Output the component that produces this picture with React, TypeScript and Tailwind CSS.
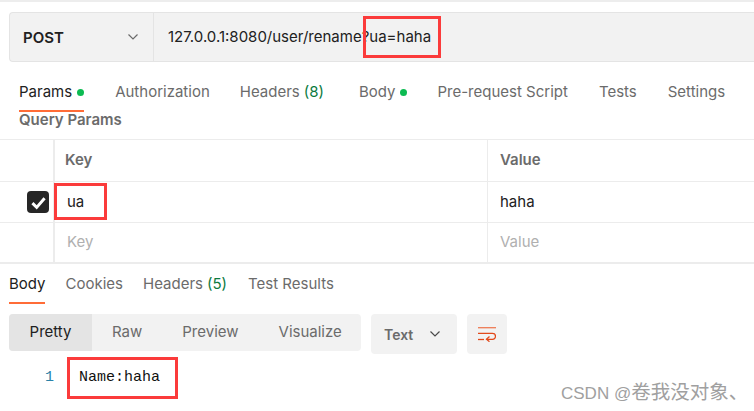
const inter = "font-['Inter','Noto_Sans',sans-serif]";

function Chevron({ className }: { className: string }) {
  return (
    <svg viewBox="0 0 12 8" className={className} fill="none" stroke="currentColor" strokeWidth="1.2">
      <path d="M1.5 1.5 6 6l4.5-4.5" />
    </svg>
  );
}

function Tab({ label, active, count, dot, className }: { label: string; active?: boolean; count?: string; dot?: boolean; className?: string }) {
  return (
    <div className={`relative flex items-center whitespace-nowrap ${active ? "text-[#212121]" : "text-[#6b6b6b]"} ${className ?? ""}`}>
      {label}
      {count && <span className="ml-1 text-[#0c7a3e]">{count}</span>}
      {dot && <span className="ml-[5px] size-[7px] rounded-full bg-[#0cbb52]" />}
    </div>
  );
}

function RedBox({ className }: { className: string }) {
  return <div className={`pointer-events-none absolute border-[3px] border-[#fb3b3b] ${className}`} />;
}

export default function App() {
  return (
    <div className={`relative h-[411px] w-[754px] overflow-hidden bg-white text-[15px] ${inter}`}>
      <div className="h-[2px] w-full bg-[#ededed]" />
      <div className="ml-[9px] mt-[10px] flex h-[50px] rounded-l-[4px] border-y border-l border-[#e4e4e4] bg-[#f2f2f2]">
        <div className="flex w-[144px] shrink-0 items-center justify-between border-r border-[#e4e4e4] pl-[13px] pr-[14px]">
          <span className="pt-[2px] font-semibold text-[#212121]">POST</span>
          <Chevron className="h-[8px] w-[12px] text-[#6b6b6b]" />
        </div>
        <div className="flex items-center pl-[14px] text-[#212121]">127.0.0.1:8080/user/rename?ua=haha</div>
      </div>

      <div className="ml-[19px] mt-[19px] flex h-[23px] items-center">
        <Tab label="Params" active dot />
        <Tab label="Authorization" className="ml-[31px]" />
        <Tab label="Headers" count="(8)" className="ml-[30px]" />
        <Tab label="Body" dot className="ml-[35px]" />
        <Tab label="Pre-request Script" className="ml-[30px]" />
        <Tab label="Tests" className="ml-[31px]" />
        <Tab label="Settings" className="ml-[31px]" />
      </div>
      <div className="ml-[19px] mt-[6px] h-[2px] w-[65px] bg-[#ff6c37]" />
      <div className="ml-[19px] mt-[-1px] h-[17px] font-semibold leading-[17px] text-[#6b6b6b]">Query Params</div>

      <div className="mt-[11px] grid grid-cols-[55px_433px_1fr] grid-rows-[41px_41px_40px] border-y border-b-2 border-[#ececec]">
        <div className="border-r-2 border-[#ececec]" />
        <div className="flex items-center border-r border-[#ececec] pl-[10px] font-semibold text-[#6b6b6b]">Key</div>
        <div className="flex items-center pl-[12px] font-semibold text-[#6b6b6b]">Value</div>

        <div className="flex items-center justify-end border-r-2 border-t border-[#ececec] pr-[4px]">
          <div className="flex size-[22px] items-center justify-center rounded-[4px] bg-[#262626]">
            <svg viewBox="0 0 14 14" className="size-[17px]" fill="none" stroke="white" strokeWidth="2.4">
              <path d="M2 7.5 5.5 11 12 3.5" />
            </svg>
          </div>
        </div>
        <div className="flex items-center border-r border-t border-[#ececec] pl-[12px] text-[#212121]">ua</div>
        <div className="flex items-center border-t border-[#ececec] pl-[12px] text-[#212121]">haha</div>

        <div className="border-r-2 border-t border-[#ececec]" />
        <div className="flex items-center border-r border-t border-[#ececec] pl-[12px] text-[#b0b0b0]">Key</div>
        <div className="flex items-center border-t border-[#ececec] pl-[12px] text-[#b0b0b0]">Value</div>
      </div>

      <div className="ml-[9px] mt-[9px] flex h-[23px] items-center">
        <Tab label="Body" active />
        <Tab label="Cookies" className="ml-[20px]" />
        <Tab label="Headers" count="(5)" className="ml-[20px]" />
        <Tab label="Test Results" className="ml-[21px]" />
      </div>
      <div className="ml-[9px] mt-[6px] h-[2px] w-[36px] bg-[#ff6c37]" />

      <div className="ml-[9px] mt-[10px] flex items-start">
        <div className="flex h-[37px] w-[352px] items-center rounded-[4px] bg-[#f2f2f2] text-[#6b6b6b]">
          <div className="flex h-full w-[83px] items-center justify-center rounded-l-[4px] bg-[#e4e4e4] text-[#212121]">Pretty</div>
          <div className="ml-[20px]">Raw</div>
          <div className="ml-[40px]">Preview</div>
          <div className="ml-[40px]">Visualize</div>
        </div>
        <div className="ml-[10px] flex h-[40px] w-[86px] items-center justify-between rounded-[4px] bg-[#f2f2f2] pl-[13px] pr-[16px] text-[14px] font-semibold text-[#6b6b6b]">
          Text
          <Chevron className="h-[8px] w-[12px] text-[#4a4a4a]" />
        </div>
        <div className="ml-[10px] flex h-[40px] w-[40px] items-center justify-center rounded-[4px] bg-[#f2f2f2]">
          <svg viewBox="0 0 18 15" className="h-[15px] w-[18px]" fill="none" stroke="#e2491b" strokeWidth="1.3">
            <path d="M0 0.7h18" stroke="#ee7b55" />
            <path d="M0 6.3h14.5a3 3 0 0 1 0 6H8.5" />
            <path d="M11.5 9.5 8.5 12.3l3 2.4" />
            <path d="M0 12.5h6" />
          </svg>
        </div>
      </div>

      <div className="mt-[3px] flex h-[42px] items-center">
        <div className="w-[54px] text-right font-['Liberation_Mono',monospace] text-[15px] text-[#2a82a8]">1</div>
        <div className="ml-[25px] font-['Liberation_Mono',monospace] text-[15px] text-[#111]">Name:haha</div>
      </div>

      <RedBox className="left-[363px] top-[16px] h-[42px] w-[78px]" />
      <RedBox className="left-[54px] top-[183px] h-[37px] w-[53px]" />
      <RedBox className="left-[67px] top-[357px] h-[42px] w-[111px]" />
      <div className="absolute left-[561px] top-[382px] font-['Liberation_Sans','Noto_Sans_CJK_SC',sans-serif] text-[17px] leading-[20px] text-[#a0a0a0]">
        CSDN @<span className="text-[19.5px]">卷我没对象、</span>
      </div>
    </div>
  );
}
